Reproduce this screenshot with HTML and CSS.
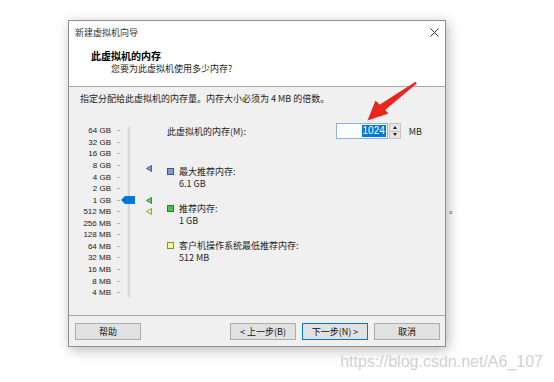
FILE: index.html
```html
<!DOCTYPE html>
<html lang="zh-CN">
<head>
  <meta charset="UTF-8" />
  <meta name="viewport" content="width=device-width, initial-scale=1.0" />
  <title>新建虚拟机向导</title>
  <link rel="stylesheet" href="styles.css">
</head>
<body>
  <div class="page">
    <span class="behind">。</span>
    <div class="dialog">
      <div class="titlebar">
        <span>新建虚拟机向导</span>
        <svg class="close" width="9" height="9" viewBox="0 0 9 9"><path d="M0.5 0.5L8.5 8.5M8.5 0.5L0.5 8.5" stroke="#333" stroke-width="1"/></svg>
      </div>
      <div class="header">
        <div class="header-title">此虚拟机的内存</div>
        <div class="header-sub">您要为此虚拟机使用多少内存?</div>
      </div>
      <div class="content">
        <div class="intro">指定分配给此虚拟机的内存量。内存大小必须为 4 MB 的倍数。</div>
        <div class="chart">
          <div class="scale">
            <div class="row"><span class="lbl">64 GB</span><span class="tick"></span></div>
            <div class="row"><span class="lbl">32 GB</span><span class="tick"></span></div>
            <div class="row"><span class="lbl">16 GB</span><span class="tick"></span></div>
            <div class="row"><span class="lbl">8 GB</span><span class="tick"></span></div>
            <div class="row"><span class="lbl">4 GB</span><span class="tick"></span></div>
            <div class="row"><span class="lbl">2 GB</span><span class="tick"></span></div>
            <div class="row"><span class="lbl">1 GB</span><span class="tick"></span></div>
            <div class="row"><span class="lbl">512 MB</span><span class="tick"></span></div>
            <div class="row"><span class="lbl">256 MB</span><span class="tick"></span></div>
            <div class="row"><span class="lbl">128 MB</span><span class="tick"></span></div>
            <div class="row"><span class="lbl">64 MB</span><span class="tick"></span></div>
            <div class="row"><span class="lbl">32 MB</span><span class="tick"></span></div>
            <div class="row"><span class="lbl">16 MB</span><span class="tick"></span></div>
            <div class="row"><span class="lbl">8 MB</span><span class="tick"></span></div>
            <div class="row"><span class="lbl">4 MB</span><span class="tick"></span></div>

            <div class="track"></div>
            <svg class="thumb" width="14" height="8" viewBox="0 0 14 8"><path d="M0 4L4 0H14V8H4Z" fill="#0078d7"/></svg>
            <svg class="marker marker-max" width="6" height="7" viewBox="0 0 6 7"><path d="M0.5 3.5L5.5 0.5V6.5Z" fill="#7c9fd4" stroke="#3d5f9c" stroke-width="1"/></svg>
            <svg class="marker marker-rec" width="6" height="7" viewBox="0 0 6 7"><path d="M0.5 3.5L5.5 0.5V6.5Z" fill="#6fd46f" stroke="#2f8f2f" stroke-width="1"/></svg>
            <svg class="marker marker-min" width="6" height="7" viewBox="0 0 6 7"><path d="M0.5 3.5L5.5 0.5V6.5Z" fill="#f4f48a" stroke="#9c9c3a" stroke-width="1"/></svg>
          </div>

          <div class="settings">
            <div class="mem-row">
              <span>此虚拟机的内存(M):</span>
              <div class="mem-input">
                <div class="spin-field"><span class="sel">1024</span></div>
                <div class="spin-btns">
                  <span class="spin-btn"><i class="up"></i></span>
                  <span class="spin-btn"><i class="down"></i></span>
                </div>
                <span class="unit">MB</span>
              </div>
            </div>
            <div class="legend">
              <div class="item">
                <span class="sq sq-blue"></span>
                <div><div>最大推荐内存:</div><div>6.1 GB</div></div>
              </div>
              <div class="item">
                <span class="sq sq-green"></span>
                <div><div>推荐内存:</div><div>1 GB</div></div>
              </div>
              <div class="item">
                <span class="sq sq-yellow"></span>
                <div><div>客户机操作系统最低推荐内存:</div><div>512 MB</div></div>
              </div>
            </div>
          </div>
        </div>
      </div>
      <div class="footer">
        <div class="btn btn-help">帮助</div>
        <div class="btn">&lt; 上一步(B)</div>
        <div class="btn btn-next">下一步(N) &gt;</div>
        <div class="btn">取消</div>
      </div>
    </div>
    <div class="watermark">https://blog.csdn.net/A6_107</div>

    <svg class="arrow" width="554" height="382" viewBox="0 0 554 382">
      <path d="M415.5 81.8L416.8 83.4L384.5 110.5L379.5 104.8Z" fill="#e8261c"/>
      <path d="M367.5 120.5L375.5 100.5L388.5 113.5Z" fill="#e8261c"/>
    </svg>
  </div>
</body>
</html>
```

FILE: styles.css
```css
body {
  margin: 0;
  background-color: #fff;
  font-family: "Noto Sans CJK SC", "Liberation Sans", sans-serif;
  font-size: 9px;
  color: #1e1e1e;
}
.page {
  position: relative;
  width: 554px;
  height: 382px;
  padding: 20px 0 0 68px;
  box-sizing: border-box;
  overflow: hidden;
}
.behind {
  position: absolute;
  left: 449px;
  top: 203px;
  color: #444;
}
.dialog {
  width: 378px;
  border: 1px solid #8e8e8e;
  background-color: #fff;
  box-shadow: 2px 3px 12px rgba(0, 0, 0, 0.28);
  box-sizing: border-box;
}
.titlebar {
  height: 23px;
  display: flex;
  align-items: center;
  justify-content: space-between;
  padding: 0 6px 0 6px;
  color: #333;
}
.header {
  height: 43px;
  box-sizing: border-box;
  border-bottom: 1px solid #a8a8a8;
  padding: 6px 0 0 22px;
}
.header-title {
  font-weight: bold;
  font-size: 10px;
  line-height: 12px;
  color: #000;
}
.header-sub {
  padding-left: 20px;
  line-height: 13px;
}
.content {
  height: 228px;
  box-sizing: border-box;
  background-color: #f0f0f0;
  padding: 6px 11px 0 11px;
}
.intro {
  line-height: 12px;
}
.chart {
  display: flex;
  margin-top: 18px;
}
.scale {
  position: relative;
  width: 87px;
  flex: none;
  padding-top: 2px;
}
.row {
  display: flex;
  align-items: center;
  height: 11.57px;
}
.lbl {
  width: 31px;
  text-align: right;
  font-family: "Liberation Sans", sans-serif;
  font-size: 8px;
  color: #222;
  white-space: nowrap;
}
.tick {
  width: 3px;
  height: 1px;
  margin-left: 6px;
  background-color: #b4b4b4;
}
.track {
  position: absolute;
  left: 47px;
  top: 4px;
  width: 2px;
  height: 170px;
  background-color: #d9d9d9;
  border-left: 1px solid #e8e8e8;
}
.thumb {
  position: absolute;
  left: 41px;
  top: 73px;
}
.marker {
  position: absolute;
  left: 66px;
}
.marker-max {
  top: 42px;
}
.marker-rec {
  top: 74px;
}
.marker-min {
  top: 85px;
}
.settings {
  flex: 1;
}
.mem-row {
  display: flex;
  align-items: center;
  justify-content: space-between;
  height: 16px;
}
.mem-input {
  display: flex;
  align-items: center;
  margin-right: 12px;
}
.spin-field {
  width: 52px;
  height: 16px;
  box-sizing: border-box;
  border: 1px solid #8fb1e0;
  background-color: #fff;
  display: flex;
  align-items: center;
  justify-content: flex-end;
  padding-right: 1px;
}
.sel {
  background-color: #0078d7;
  color: #fff;
  font-family: "Liberation Sans", sans-serif;
  font-size: 10px;
  line-height: 12px;
  padding: 0 1px;
}
.spin-btns {
  display: flex;
  flex-direction: column;
  margin-left: 1px;
  width: 12px;
  height: 16px;
}
.spin-btn {
  flex: 1;
  background-color: #e6e6e6;
  border: 1px solid #c4c4c4;
  display: flex;
  align-items: center;
  justify-content: center;
}
.spin-btn + .spin-btn {
  border-top: none;
}
.up {
  border-left: 2.5px solid transparent;
  border-right: 2.5px solid transparent;
  border-bottom: 3px solid #222;
}
.down {
  border-left: 2.5px solid transparent;
  border-right: 2.5px solid transparent;
  border-top: 3px solid #222;
}
.unit {
  margin-left: 8px;
}
.legend {
  display: flex;
  flex-direction: column;
  gap: 13px;
  margin-top: 27px;
}
.item {
  display: flex;
  line-height: 12px;
}
.sq {
  width: 7px;
  height: 7px;
  box-sizing: border-box;
  margin: 2px 5px 0 0;
  flex: none;
}
.sq-blue {
  background-color: #7e9ccb;
  border: 1px solid #3e5687;
}
.sq-green {
  background-color: #48c448;
  border: 1px solid #2a7d2a;
}
.sq-yellow {
  background-color: #f6f68c;
  border: 1px solid #8c8c3c;
}
.footer {
  height: 31px;
  box-sizing: border-box;
  border-top: 1px solid #a8a8a8;
  background-color: #f0f0f0;
  padding: 7px 5px 0 6px;
  display: flex;
  gap: 6px;
}
.btn {
  width: 66px;
  height: 17px;
  box-sizing: border-box;
  border: 1px solid #adadad;
  background-color: #e1e1e1;
  display: flex;
  align-items: center;
  justify-content: center;
  color: #111;
}
.btn-help {
  margin-right: auto;
}
.btn-next {
  border-color: #0078d7;
}
.watermark {
  margin-top: 6px;
  margin-right: 11px;
  text-align: right;
  font-family: "Liberation Sans", sans-serif;
  font-size: 16px;
  line-height: 18px;
  color: #d2d2d2;
}
.arrow {
  position: absolute;
  left: 0;
  top: 0;
  pointer-events: none;
}
```
